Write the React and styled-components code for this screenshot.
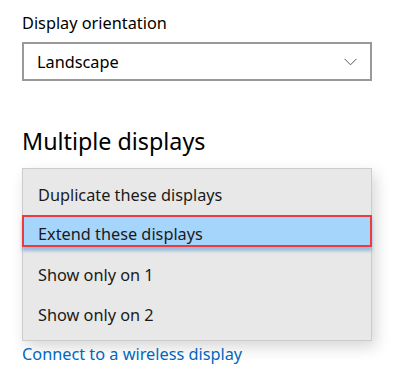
import React from "react";
import styled, { createGlobalStyle } from "styled-components";

const Global = createGlobalStyle`
  html, body { margin: 0; padding: 0; background: #ffffff; }
  body { font-family: "Noto Sans", "Open Sans", sans-serif; color: #000; }
`;

const Page = styled.div`
  width: 416px;
  height: 372px;
  box-sizing: border-box;
  padding: 12px 44px 0 22px;
  display: flex;
  flex-direction: column;
  overflow: hidden;
`;

const Label = styled.div`
  font-size: 16.3px;
  line-height: 22px;
  color: #000;
`;

const Select = styled.div`
  margin-top: 8px;
  height: 39px;
  box-sizing: border-box;
  border: 2px solid #999999;
  display: flex;
  align-items: center;
  justify-content: space-between;
  padding: 0 13px 0 13px;
  font-size: 16.3px;
  color: #000;
`;

const Heading = styled.div`
  margin-top: 44px;
  font-size: 23.3px;
  line-height: 32px;
  color: #000;
`;

const Menu = styled.div`
  margin-top: 11px;
  background: #e8e8e8;
  border: 1px solid #cccccc;
  box-shadow: 4px 6px 14px rgba(0, 0, 0, 0.16);
  padding: 6px 0 5px 0;
  display: flex;
  flex-direction: column;
`;

const Item = styled.div`
  height: 40px;
  box-sizing: border-box;
  display: flex;
  align-items: center;
  padding-left: 15px;
  font-size: 16.3px;
  color: #1a1a1a;
`;

const SelectedItem = styled.div`
  height: 40px;
  margin: 0 -1px;
  display: flex;
  flex-direction: column;
`;

const Highlight = styled.div`
  height: 32px;
  box-sizing: border-box;
  background: #a6d5fc;
  border: 2px solid #eb3a40;
  box-shadow: 0 4px 3px rgba(90, 150, 210, 0.55);
  display: flex;
  align-items: flex-end;
  padding: 0 0 0 14px;
  font-size: 16.3px;
  line-height: 22px;
  color: #1a1a1a;
`;

const Link = styled.a`
  margin-top: 2px;
  font-size: 16.3px;
  line-height: 22px;
  color: #0067c0;
  text-decoration: none;
`;

const Chevron = () => (
  <svg width="13" height="8" viewBox="0 0 13 8" fill="none">
    <path d="M0.5 0.8 L6.5 6.8 L12.5 0.8" stroke="#555" strokeWidth="1" />
  </svg>
);

export default function App() {
  return (
    <>
      <Global />
      <Page>
        <Label>Display orientation</Label>
        <Select>
          <span>Landscape</span>
          <Chevron />
        </Select>
        <Heading>Multiple displays</Heading>
        <Menu>
          <Item>Duplicate these displays</Item>
          <SelectedItem>
            <Highlight>Extend these displays</Highlight>
          </SelectedItem>
          <Item>Show only on 1</Item>
          <Item>Show only on 2</Item>
        </Menu>
        <Link href="#">Connect to a wireless display</Link>
      </Page>
    </>
  );
}
